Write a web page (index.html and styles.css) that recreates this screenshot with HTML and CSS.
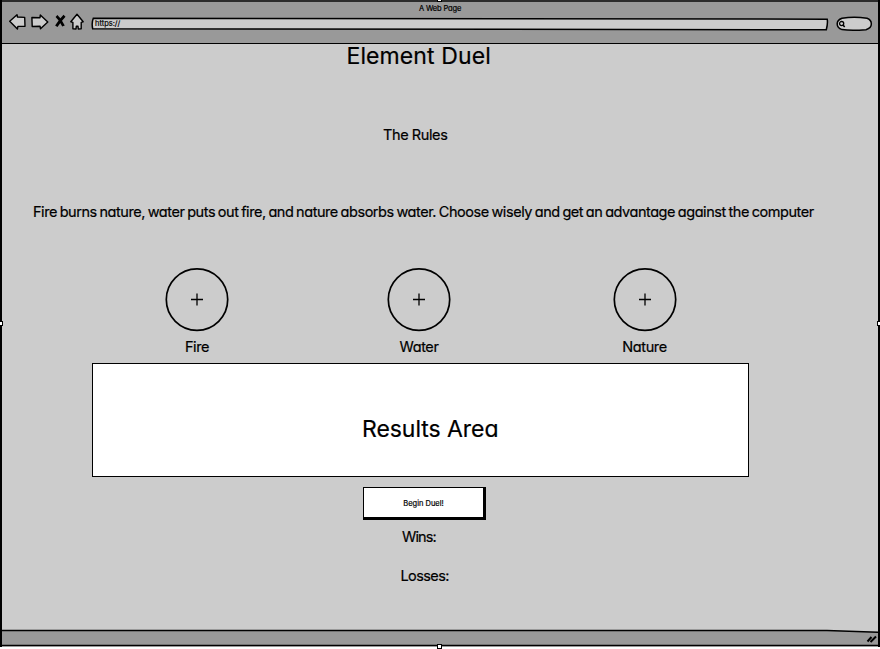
FILE: index.html
```html
<!DOCTYPE html>
<html lang="en">
<head>
<meta charset="utf-8">
<title>Element Duel</title>
<link rel="stylesheet" href="styles.css">
</head>
<body>
<div class="window">
  <header class="chrome">
    <div class="window-title">A Web Page</div>
    <div class="toolbar">
      <svg class="nav" width="80" height="20" viewBox="0 0 80 20">
        <g fill="#ccc" stroke="#000" stroke-width="1.4" stroke-linejoin="round">
          <path d="M.7 9.3 8 2.7 8.5 5 15.7 5.4 16 14.2 8.9 14.4 8.4 17Z"/>
          <path d="M22.9 5.5 31 5.7 31.3 3 38.8 10 31.5 16.8 31.1 14.3 23.2 14.5Z"/>
          <path d="M68 2.3 74.2 9.8 72.2 10.4 72.2 16.7 69.3 17 69 14.3 67.3 14.3 67 17 63.9 16.8 63.9 10.4 61.8 9.8Z"/>
        </g>
        <path d="M47.5 4 Q51.5 7.5 54.5 14 M55.5 3.8 Q51.5 8 47.3 14.3" fill="none" stroke="#000" stroke-width="2.8"/>
      </svg>
      <div class="address">
        <svg width="738" height="14" viewBox="0 0 738 14"><path d="M2.3 1.3 736.2 2.2Q737 6 735.3 12.8L1.7 11.8Q.4 6 2.3 1.3Z" fill="#ccc" stroke="#000" stroke-width="1.5"/></svg>
        <span>https://</span>
      </div>
      <svg class="search" width="37" height="16" viewBox="0 0 37 16">
        <path d="M6 2.2Q18 .2 31 2.2Q35.6 4 35.3 8Q35.5 12 30 13.7Q15 14.8 6 13.6Q1.2 12 1.2 8Q1 4 6 2.2Z" fill="#ccc" stroke="#000" stroke-width="1.5"/>
        <circle cx="5.6" cy="7.6" r="2.1" fill="none" stroke="#000" stroke-width="1.3"/><path d="M7 9 8.7 11" stroke="#000" stroke-width="1.5"/>
      </svg>
    </div>
  </header>
  <main>
    <h1>Element Duel</h1>
    <h2>The Rules</h2>
    <p class="rules">Fire burns nature, water puts out fire, and nature absorbs water. Choose wisely and get an advantage against the computer</p>
    <div class="elements">
      <div class="element"><svg width="64" height="64"><circle cx="32" cy="31.6" r="30.7"/><path d="M26 31.5H38M32 25.5V37.5"/></svg><span>Fire</span></div>
      <div class="element"><svg width="64" height="64"><circle cx="32" cy="31.6" r="30.7"/><path d="M26 31.5H38M32 25.5V37.5"/></svg><span>Water</span></div>
      <div class="element"><svg width="64" height="64"><circle cx="32" cy="31.6" r="30.7"/><path d="M26 31.5H38M32 25.5V37.5"/></svg><span>Nature</span></div>
    </div>
    <section class="results"><span>Results Area</span></section>
    <button class="begin">Begin Duel!</button>
    <div class="wins">Wins:</div>
    <div class="losses">Losses:</div>
  </main>
  <footer>
    <svg width="876" height="18" viewBox="0 0 876 18"><path d="M0 1.5H825L876 3V16.5H0Z" fill="#999"/><path d="M0 1.5H825L876 3.2M0 16.5H876" fill="none" stroke="#000" stroke-width="1.4"/><path d="M865.5 12.5 869.5 8M868.5 13 874 7.5" stroke="#000" stroke-width="2"/></svg>
  </footer>
  <i class="handle top"></i><i class="handle left"></i><i class="handle right"></i><i class="handle bottom"></i>
</div>
</body>
</html>
```
FILE: styles.css
```css
* { box-sizing: border-box; }
body {
  margin: 0;
  height: 649px;
  background: #fff;
  color: #000;
  font-family: Inter, "Liberation Sans", sans-serif;
  font-feature-settings: "cv11" 1;
  font-size: 14.5px;
  letter-spacing: -0.4px;
  line-height: 20px;
  white-space: nowrap;
  -webkit-text-stroke: 0.2px #000;
}
svg { display: block; flex: none; }
.window {
  position: relative;
  display: flex;
  flex-direction: column;
  height: 647px;
  border-left: 2px solid #000;
  border-right: 2px solid #000;
  background: #ccc;
}
.chrome {
  height: 44px;
  background: #999;
  border-top: 2px solid #2b2b2b;
  border-bottom: 1.5px solid #000;
}
.window-title {
  height: 11px;
  padding-left: 417px;
  font-size: 7.5px;
  letter-spacing: -0.15px;
  line-height: 13px;
}
.toolbar { display: flex; padding-left: 7px; }
.nav { margin-top: -1px; }
.address { display: grid; margin: 4px 0 0 2px; }
.address > * { grid-area: 1 / 1; }
.address span {
  padding-left: 4px;
  font-size: 7.5px;
  letter-spacing: 0;
  line-height: 14px;
}
.search { margin: 3px 0 0 7px; }
main { flex: 1; }
h1, h2, p { margin: 0; font-weight: 400; }
h1 {
  height: 81px;
  padding-left: 344.5px;
  font-size: 23px;
  letter-spacing: 0.1px;
  line-height: 24px;
}
h2 { height: 77px; padding-left: 381px; font-size: inherit; }
.rules {
  height: 66px;
  padding-left: 31px;
  letter-spacing: -0.45px;
  word-spacing: -0.9px;
}
.elements {
  display: grid;
  grid-template-columns: 222px 225.5px 64px;
  padding-left: 163px;
  height: 95px;
}
.element { display: flex; flex-direction: column; width: 64px; }
.element svg { fill: none; stroke: #000; stroke-width: 1.7; }
.element path { stroke-width: 1.3; }
.element span { margin-top: 5px; align-self: center; }
.results {
  width: 657px;
  height: 114px;
  margin-left: 90px;
  padding: 50px 0 0 269px;
  border: 1.5px solid #000;
  background: #fff;
  font-size: 23px;
  letter-spacing: -0.05px;
  line-height: 30px;
}
.begin {
  display: block;
  width: 123px;
  height: 33px;
  margin: 10px 0 0 361px;
  padding: 2px 0 0;
  border: solid #000;
  border-width: 1.5px 3px 3px 1.5px;
  background: #fff;
  color: #000;
  font: 7.5px Inter, sans-serif;
}
.wins { margin: 7px 0 0 400px; letter-spacing: -0.85px; }
.losses { margin: 19px 0 0 398.5px; letter-spacing: -0.6px; }
footer { height: 18px; }
.handle {
  position: absolute;
  width: 5px;
  height: 5px;
  border: 1px solid #000;
  background: #fff;
}
.top { left: 435px; top: -3px; }
.left { left: -4px; top: 321px; }
.right { right: -4px; top: 321px; }
.bottom { left: 435px; bottom: -2px; }
```
